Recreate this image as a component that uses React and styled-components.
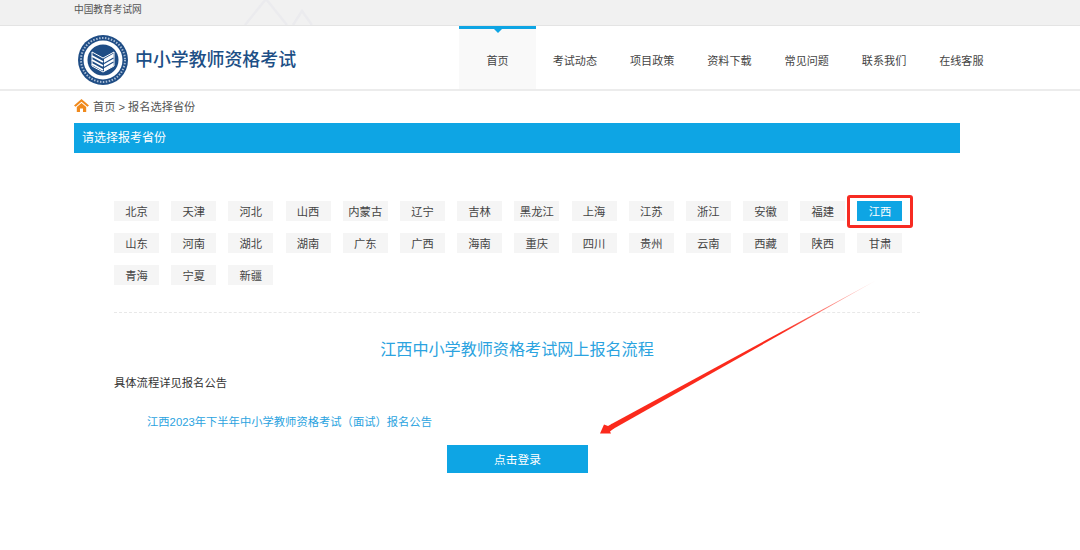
import React from "react";
import styled, { createGlobalStyle } from "styled-components";

const Global = createGlobalStyle`
  html, body { margin: 0; padding: 0; background: #fff; }
  body { font-family: "Liberation Sans", "Noto Sans CJK SC", sans-serif; color: #333; }
  * { box-sizing: border-box; }
`;

const Page = styled.div`
  position: relative;
  width: 1080px;
  height: 550px;
  overflow: hidden;
  background: #fff;
`;

const TopBar = styled.div`
  position: relative;
  height: 26px;
  background: #f1f1f1;
  border-bottom: 1px solid #e4e4e4;
  padding-left: 74px;
  font-size: 9.7px;
  line-height: 20px;
  color: #555;
`;

const Mountains = styled.svg`
  position: absolute;
  left: 240px;
  top: 0;
`;

const Header = styled.header`
  height: 65px;
  border-bottom: 2px solid #ececec;
  display: flex;
  justify-content: space-between;
  padding-left: 78px;
  padding-right: 80px;
`;

const Brand = styled.div`
  display: flex;
  align-items: center;
  gap: 7px;
  height: 63px;
  padding-top: 4px;
`;

const BrandName = styled.div`
  font-size: 17.9px;
  font-weight: 500;
  color: #1d4f86;
  white-space: nowrap;
  margin-bottom: 4px;
`;

const Nav = styled.nav`
  display: flex;
`;

const NavItem = styled.a`
  position: relative;
  width: 77.3px;
  height: 63px;
  display: flex;
  align-items: center;
  justify-content: center;
  font-size: 11.1px;
  padding-top: 2px;
  color: #444;
  background: ${(p) => (p.$active ? "#f9f9f9" : "transparent")};
  border-top: 3px solid ${(p) => (p.$active ? "#0ea5e4" : "transparent")};
  ${(p) =>
    p.$active &&
    `&::after {
      content: "";
      position: absolute;
      top: 0;
      left: 50%;
      margin-left: -4px;
      border-left: 4px solid transparent;
      border-right: 4px solid transparent;
      border-top: 4px solid #0ea5e4;
    }`}
`;

const Main = styled.main`
  width: 886px;
  margin-left: 74px;
`;

const Crumb = styled.div`
  height: 32px;
  display: flex;
  align-items: center;
  gap: 4px;
  font-size: 11.2px;
  color: #555;
  padding-bottom: 3px;
`;

const SectionBar = styled.div`
  height: 30px;
  line-height: 31px;
  background: #0ea5e4;
  color: #fff;
  font-size: 12px;
  padding-left: 8px;
`;

const Content = styled.div`
  width: 806px;
  margin-left: 40px;
  padding-top: 48px;
`;

const Provinces = styled.div`
  display: grid;
  grid-template-columns: repeat(14, 45px);
  column-gap: 12.2px;
  row-gap: 12px;
`;

const Province = styled.a`
  position: relative;
  height: 20px;
  line-height: 22px;
  text-align: center;
  font-size: 11.3px;
  color: ${(p) => (p.$active ? "#fff" : "#444")};
  background: ${(p) => (p.$active ? "#0ea5e4" : "#f5f5f5")};
`;

const Highlight = styled.span`
  position: absolute;
  left: -10px;
  right: -11px;
  top: -6px;
  bottom: -7px;
  border: 3px solid #f72b22;
  border-radius: 3px;
`;

const Divider = styled.div`
  margin-top: 27px;
  border-top: 1px dashed #e8e8e8;
`;

const FlowTitle = styled.h2`
  margin: 26px 0 0;
  font-size: 16.1px;
  font-weight: 400;
  line-height: 20px;
  text-align: center;
  color: #2ba3e0;
`;

const Note = styled.p`
  margin: 15px 0 0;
  font-size: 11.3px;
  line-height: 18px;
  color: #333;
`;

const NoticeLink = styled.a`
  display: block;
  margin: 21px 0 0 33px;
  font-size: 11.3px;
  line-height: 18px;
  color: #2ba3e0;
`;

const LoginButton = styled.a`
  display: block;
  width: 141px;
  height: 28px;
  line-height: 29px;
  margin: 14px 0 0 333px;
  background: #0ea5e4;
  color: #fff;
  font-size: 11.7px;
  text-align: center;
`;

const ArrowLayer = styled.svg`
  position: absolute;
  left: 0;
  top: 0;
  pointer-events: none;
`;

const Logo = () => (
  <svg width="50" height="50" viewBox="0 0 50 50">
    <circle cx="25" cy="25" r="25" fill="#1f4d85" />
    <circle cx="25" cy="25" r="22" fill="none" stroke="#a9bdd6" strokeWidth="2" strokeDasharray="1.5 1.5" />
    <circle cx="25" cy="25" r="19.5" fill="#fff" />
    <circle cx="25" cy="25" r="15.5" fill="#1f4d85" />
    <path d="M14 17 L25 23 L36 17 V31 L25 37 L14 31 Z" fill="#1f4d85" stroke="#fff" strokeWidth="1" />
    <path d="M14 21 L25 27 M14 25 L25 31 M14 29 L25 35" stroke="#fff" strokeWidth="1.8" fill="none" />
    <path d="M26 24 L35.5 18.5 V31 L26 36.5 Z" fill="#fff" />
    <path d="M26 28.5 L35.5 23 M26 32.5 L35.5 27" stroke="#1f4d85" strokeWidth="1.2" />
  </svg>
);

const HomeIcon = () => (
  <svg width="15" height="13" viewBox="0 0 15 13">
    <path d="M7.5 0 L15 6.5 L13.4 7.8 L7.5 2.7 L1.6 7.8 L0 6.5 Z" fill="#f08a1d" />
    <path d="M2.8 8 L7.5 4 L12.2 8 V13 H9 V9.5 H6 V13 H2.8 Z" fill="#f08a1d" />
  </svg>
);

const navItems = ["首页", "考试动态", "项目政策", "资料下载", "常见问题", "联系我们", "在线客服"];
const provinces = [
  "北京", "天津", "河北", "山西", "内蒙古", "辽宁", "吉林", "黑龙江", "上海", "江苏", "浙江", "安徽", "福建", "江西",
  "山东", "河南", "湖北", "湖南", "广东", "广西", "海南", "重庆", "四川", "贵州", "云南", "西藏", "陕西", "甘肃",
  "青海", "宁夏", "新疆",
];

export default function App() {
  return (
    <Page>
      <Global />
      <TopBar>
        中国教育考试网
        <Mountains width="80" height="25" viewBox="0 0 80 25">
          <path d="M5 25 L26 -1 L47 25 M53 25 L62 11 L72 25" fill="none" stroke="#ebebee" strokeWidth="2.5" />
        </Mountains>
      </TopBar>
      <Header>
        <Brand>
          <Logo />
          <BrandName>中小学教师资格考试</BrandName>
        </Brand>
        <Nav>
          {navItems.map((item, i) => (
            <NavItem key={item} $active={i === 0}>{item}</NavItem>
          ))}
        </Nav>
      </Header>
      <Main>
        <Crumb>
          <HomeIcon />
          <span>首页 &gt; 报名选择省份</span>
        </Crumb>
        <SectionBar>请选择报考省份</SectionBar>
        <Content>
          <Provinces>
            {provinces.map((name) => (
              <Province key={name} $active={name === "江西"}>
                {name}
                {name === "江西" && <Highlight />}
              </Province>
            ))}
          </Provinces>
          <Divider />
          <FlowTitle>江西中小学教师资格考试网上报名流程</FlowTitle>
          <Note>具体流程详见报名公告</Note>
          <NoticeLink>江西2023年下半年中小学教师资格考试（面试）报名公告</NoticeLink>
          <LoginButton>点击登录</LoginButton>
        </Content>
      </Main>
      <ArrowLayer width="1080" height="550" viewBox="0 0 1080 550">
        <defs>
          <linearGradient id="tail" gradientUnits="userSpaceOnUse" x1="875" y1="281" x2="780" y2="333">
            <stop offset="0" stopColor="#fb2a1c" stopOpacity="0.2" />
            <stop offset="1" stopColor="#fb2a1c" stopOpacity="1" />
          </linearGradient>
        </defs>
        <path d="M875 281 L611 424.3 L613.5 428.7 Z" fill="url(#tail)" />
        <path d="M600 433.5 L604 424.5 L608 426 L612 423.8 L614.2 428.3 L610 431.5 L611 433.5 Z" fill="#fb2a1c" />
      </ArrowLayer>
    </Page>
  );
}
